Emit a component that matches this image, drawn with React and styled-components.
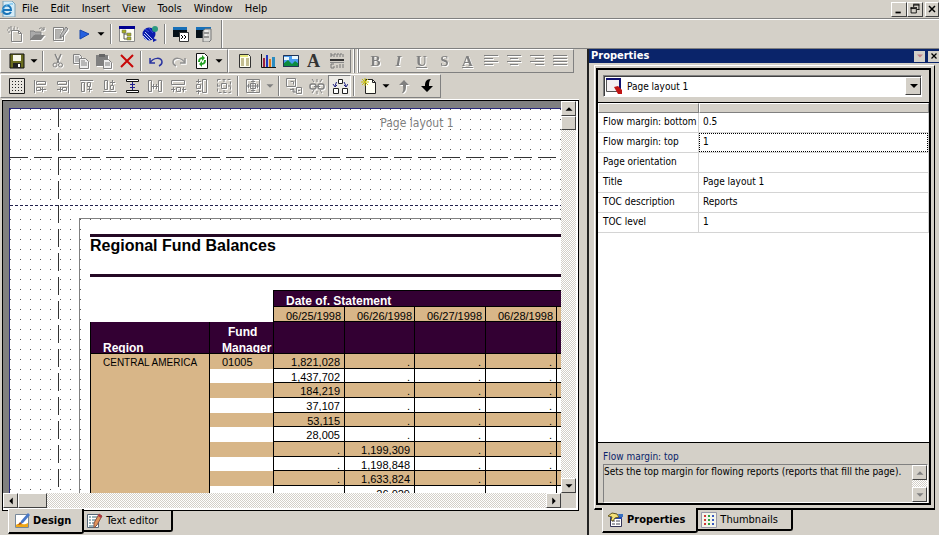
import { useState } from 'react';
import styled, { createGlobalStyle, css } from 'styled-components';

const GRAY = '#808080';
const NAVY = '#0a246a';

const icons = {
  explorer: (
    <>
      <path d="M3 0h9l3 3v13H3z" fill="#d4ecf8" stroke="#7aa0b4" />
      <path d="M3 9h8c0-6-8-6-8 0 0 5 6 5 8 2" fill="none" stroke="#1a74b8" strokeWidth="2" />
      <path d="M1 12C2 7 8 2 13 3" fill="none" stroke="#58b4ea" />
    </>
  ),
  newDoc: (
    <>
      <path d="M4.500 4.500h7l3 3v8h-10z M11.500 4.500v3h3" fill="none" stroke={GRAY} />
      <path d="M1 2h2M4 0v3M1 6h2M3 4h2M7 1h1M0 4h1M6 3h2M10 2h1" stroke={GRAY} />
    </>
  ),
  open: (
    <>
      <path d="M0 14V5h4l1 1h6v3H5z" fill="#aaa" stroke={GRAY} />
      <path d="M0 14l4-5h11l-4 5z" fill={GRAY} />
      <path d="M9 3c2-2 4-1 5 1M14 1v3h-3" fill="none" stroke={GRAY} />
    </>
  ),
  editDoc: (
    <>
      <path d="M.5 1.500h10v13H.5z" fill="none" stroke={GRAY} />
      <path d="M2 4h7M2 6h6M2 8h5M2 10h5M2 12h7" stroke={GRAY} />
      <path d="M13 1l2 2-5 7-3 2 1-4z" fill="#bbb" stroke={GRAY} />
    </>
  ),
  run: <path d="M4 4l9 4-9 5z" fill="#2560e0" stroke="#1746ad" />,
  tree: (
    <>
      <path d="M.5.5h15v15H.5z" fill="#fffff4" stroke="#888" />
      <path d="M0 0h16v3H0z" fill="#000090" />
      <path d="M5 5v8h5M5 8h5" fill="none" stroke="#555" />
      <path d="M3 4h4v3H3zM8 7h4v3H8zM8 11h4v3H8z" fill="#a8b020" stroke="#666" strokeWidth=".5" />
    </>
  ),
  globe: (
    <>
      <circle cx="7" cy="8" r="6.500" fill="#0c1cac" />
      <path d="M1 10l5 5M2 8l6 6M3 6l7 7" stroke="#b8cdf8" />
      <path d="M3 3l4 3M7 2l4 5" stroke="#3850d8" />
      <circle cx="13" cy="3" r="3" fill="#2c9a80" />
      <path d="M11 12l4 2-4 2z" fill="#0c1cac" />
    </>
  ),
  winNext: (
    <>
      <path d="M0 1h14v10H0z" fill="#061018" />
      <path d="M0 1h14v3H0z" fill="#1870b8" />
      <path d="M6.500 6.500h9v9h-9z" fill="#fff" stroke="#333" />
      <path d="M8 9l2 2-2 2M11 9l2 2-2 2" fill="none" stroke="#000" />
    </>
  ),
  winServer: (
    <>
      <path d="M0 1h14v11H0z" fill="#061018" />
      <path d="M0 1h15v3H0z" fill="#1870b8" />
      <path d="M7 5l2-2h6v11l-2 2H7z" fill="#d8d8d4" stroke="#777" />
      <path d="M8 7h5M8 11h5" stroke="#555" />
      <path d="M9 9h2M9 5h3" stroke="#fff" />
    </>
  ),
  save: (
    <>
      <path d="M1 1h14v14H1z" fill="#6b6d20" stroke="#111" />
      <path d="M4 2h8v6H4z" fill="#f6f6ec" />
      <path d="M4 10h8v5H4z" fill="#222" />
      <path d="M9 11h2v3H9z" fill="#fff" />
    </>
  ),
  cut: (
    <>
      <path d="M5 1l4 9M11 1L7 10" stroke={GRAY} fill="none" strokeWidth="1.400" />
      <circle cx="5" cy="12" r="2" fill="none" stroke={GRAY} />
      <circle cx="10.500" cy="12" r="2" fill="none" stroke={GRAY} />
    </>
  ),
  copy: (
    <>
      <path d="M.5 1.500h6l2 2v7h-8z" fill="#eee" stroke={GRAY} />
      <path d="M6.500 5.500h6l3 3v7h-9z" fill="#eee" stroke={GRAY} />
      <path d="M2 4h4M2 6h4M2 8h4M8 8h4M8 10h6M8 12h6" stroke={GRAY} />
    </>
  ),
  paste: (
    <>
      <path d="M0 2h12v11H0z" fill={GRAY} />
      <path d="M3 1h6v3H3z" fill="#666" />
      <path d="M7.500 6.500h5l3 3v6h-8z" fill="#eee" stroke={GRAY} />
      <path d="M9 10h5M9 12h5" stroke={GRAY} />
    </>
  ),
  remove: <path d="M2 2l12 12M14 2L2 14" stroke="#c80808" strokeWidth="2" />,
  undo: <path d="M2 5v5h5M2 10c3-6 12-6 12-1 0 2-1 3-3 4" fill="none" stroke="#2a34a0" strokeWidth="1.500" />,
  redo: <path d="M14 5v5H9M14 10c-3-6-12-6-12-1 0 2 1 3 3 4" fill="none" stroke="#909090" strokeWidth="1.500" />,
  refresh: (
    <>
      <path d="M2.500.5h8l3 3v12h-11z" fill="#fff" stroke="#111" />
      <path d="M5 9c0-4 2-4 5-4M11 7c0 4-2 4-5 4" fill="none" stroke="#22a022" strokeWidth="2" />
      <path d="M8 2l3 3-3 3zM8 8v6l-3-3z" fill="#22a022" />
    </>
  ),
  report: (
    <>
      <path d="M2.500 1.500h9l2 2v11h-11z" fill="#fffff0" stroke="#333" />
      <path d="M3 2h8v2H3z" fill="#e8e87c" />
      <path d="M4 6h3M9 6h3M4 8h3M9 8h3M4 10h3M9 10h3M4 12h3M9 12h3" stroke="#887c30" />
    </>
  ),
  chart: (
    <>
      <path d="M1.500 1v13.500H16" fill="none" stroke="#111" />
      <path d="M3 5h2v9H3z" fill="#a02040" />
      <path d="M6 2h2v12H6z" fill="#2038c0" />
      <path d="M9 6h2v8H9z" fill="#e07818" />
      <path d="M12 4h3v10h-3z" fill="#2a8cc0" />
    </>
  ),
  picture: (
    <>
      <path d="M0 2h16v12H0z" fill="#4a9cf0" />
      <path d="M1 4h5v3H1zM9 3h6v3H9z" fill="#e8f8ff" />
      <path d="M0 14v-3l5-4 4 4 3-3 4 3v3z" fill="#0c8c40" />
      <path d="M.5 2.500h15v11H.5z" fill="none" stroke="#235" />
    </>
  ),
  label: (
    <>
      <path d="M2 0v4M5 1v3M8 1v3M11 1v3M14 1v3M2 2h2M5 1h2M8 1h2M11 1h2" stroke="#777" />
      <path d="M1 6h14v2H1z" fill="#333" />
      <path d="M1 9.500h14" stroke="#888" />
      <path d="M2 11v4M2 11h3M2 15h3M5 13v2M8 12v3M11 11v4M14 11v4" stroke="#777" />
    </>
  ),
  lines: <path d="M1 2.500h14M1 5.500h9M1 8.500h14M1 11.500h9" stroke={GRAY} />,
  linesCenter: <path d="M1 2.500h14M4 5.500h8M1 8.500h14M4 11.500h8" stroke={GRAY} />,
  linesRight: <path d="M1 2.500h14M6 5.500h9M1 8.500h14M6 11.500h9" stroke={GRAY} />,
  linesFull: <path d="M1 2.500h14M1 5.500h14M1 8.500h14M1 11.500h14" stroke={GRAY} />,
  grid: (
    <>
      <path d="M.5.5h15v15H.5z" fill="#e8e5df" stroke="#222" />
      <path d="M3 3.500h11M3 6.500h11M3 9.500h11M3 12.500h11" stroke="#222" strokeDasharray="1 2" />
    </>
  ),
  alignLeft: <path d="M2.500 2v13M4.500 3.500h9v3h-9zM4.500 9.500h4v3h-4zM9 11.500h5M10.500 9v5" fill="none" stroke={GRAY} />,
  alignRight: <path d="M13.500 2v13M2.500 3.500h9v3h-9zM7.500 9.500h4v3h-4zM2 11.500h5M5.500 9v5" fill="none" stroke={GRAY} />,
  alignTop: <path d="M2 2.500h13M3.500 4.500h3v9h-3zM9.500 4.500h3v4h-3zM11.500 9v5M9 11.500h5" fill="none" stroke={GRAY} />,
  alignBottom: <path d="M2 13.500h13M3.500 2.500h3v9h-3zM9.500 7.500h3v4h-3zM11.500 2v5M9 4.500h5" fill="none" stroke={GRAY} />,
  spaceV: (
    <>
      <path d="M2.500 1.500h12v2h-12zM2.500 12.500h12v2h-12z" fill="#fff" stroke="#111" />
      <path d="M8.500 4v8M6 6.500h5M6 9.500h5" fill="none" stroke="#202090" />
    </>
  ),
  spaceH: <path d="M1.500 2.500h3v11h-3zM11.500 2.500h3v11h-3zM5 8.500h6M6.500 6v5M9.500 6v5" fill="none" stroke={GRAY} />,
  sameWidth: <path d="M1.500 2.500h13v4h-13zM6.500 9.500h4v4h-4zM1 11.500h4M3.500 9v5M12 11.500h4M13.500 9v5" fill="none" stroke={GRAY} />,
  sameHeight: <path d="M9.500 1.500h4v13h-4zM3.500 6.500h4v4h-4zM5.500 1v4M3 3.500h5M5.500 12v4M3 13.500h5" fill="none" stroke={GRAY} />,
  sameSize: (
    <>
      <path d="M1.500 1.500h13v13h-13z" fill="none" stroke={GRAY} strokeDasharray="3 2" />
      <path d="M5.500 5.500h5v5h-5zM8 1v3M8 12v3M1 8h3M12 8h3" fill="none" stroke={GRAY} />
    </>
  ),
  center: (
    <>
      <path d="M1.500 1.500h13v13h-13zM5.500 5.500h5v5h-5z" fill="none" stroke={GRAY} />
      <path d="M8 2v12M2 8h12M6 3.500h4M6 12.500h4M3.500 6v4M12.500 6v4" stroke={GRAY} />
    </>
  ),
  group: <path d="M.5.5h9v8h-9zM4.500 3.500h3v3M10.500 9.500h5v6h-5zM4 11.500h4v3M7 10v4h3M12 12.500h2" fill="none" stroke={GRAY} />,
  unlink: (
    <>
      <rect x="1" y="6" width="6" height="5" rx="2" fill="none" stroke={GRAY} strokeWidth="1.500" />
      <rect x="9" y="6" width="6" height="5" rx="2" fill="none" stroke={GRAY} strokeWidth="1.500" />
      <path d="M5 8.500h6M8 1v3M3 1l2 3M13 1l-2 3M8 13v3M3 15l2-3M13 15l-2-3" stroke={GRAY} />
    </>
  ),
  flow: (
    <>
      <path d="M6.500 1.500h4v4h-4zM1.500 10.500h5v5h-5zM10.500 10.500h5v5h-5z" fill="#fff" stroke="#222" />
      <path d="M4.500 4L3 8M1 6l2 3 2-2M12 4l2 4M12 7l2 2 2-3" fill="none" stroke="#202080" />
    </>
  ),
  newPage: (
    <>
      <path d="M4.500 1.500h7l3 3v11h-10z" fill="#fffff4" stroke="#222" />
      <path d="M11.500 1.500v3h3" fill="none" stroke="#222" />
      <path d="M4 0v8M0 4h8M1 1l6 6M7 1L1 7" stroke="#c8c010" />
    </>
  ),
  up: <path d="M8 2l5 5h-3c0 4 0 6-3 8H6c2-3 1-5 1-8H3z" fill={GRAY} />,
  down: <path d="M8 14l6-6h-4c0-3 0-5 2-7-5 0-6 3-6 7H2z" fill="#000" />,
  pageLayout: (
    <>
      <path d="M.5.5h14v13H.5z" fill="#f4f0f2" stroke="#555" />
      <path d="M0 0h15v2H0zM13 0h2v11h-2z" fill="#101070" />
      <path d="M8 9l4-1 4 4v4h-4z" fill="#c01414" />
    </>
  ),
  design: (
    <>
      <path d="M1.500 1.500h13v13h-13z" fill="#fff" stroke="#789" />
      <path d="M2 12c4-3 7 1 12-2v4H2z" fill="#f0a818" />
      <path d="M14 0l2 2-7 8-3 1 1-3z" fill="#4878c8" />
      <path d="M6 9l2 2-4 1z" fill="#a04818" />
    </>
  ),
  textEditor: (
    <>
      <path d="M.5 1.500h11v13H.5z" fill="#fff" stroke="#567" />
      <path d="M2 4h2M5 4h5M2 7h2M5 7h5M2 10h2M5 10h3M2 13h5" stroke="#367" />
      <path d="M12 1l3 2-5 9-3 3v-5z" fill="#e0935c" stroke="#854" />
      <path d="M12 1l3 2-1 2-3-2z" fill="#b03040" />
    </>
  ),
  properties: (
    <>
      <path d="M2.500 5.500h11v9h-11z" fill="#fff" stroke="#335" />
      <path d="M2 5h12v2H2z" fill="#2848b0" />
      <path d="M4 9h3M8 9h4M4 12h3M8 12h4" stroke="#445" />
      <path d="M0 4l4-3 5 1 2 3-4 1-2 3-2-1 1-3z" fill="#f4e078" stroke="#665820" />
      <path d="M10 2h5v3h-4z" fill="#3870c0" />
    </>
  ),
  thumbnails: (
    <>
      <path d="M.5.5h15v15H.5z" fill="#f4f4ea" stroke="#99a" />
      <path d="M4 3v11" stroke="#d03838" strokeWidth="2" strokeDasharray="2 2" />
      <path d="M8 3v11" stroke="#30a040" strokeWidth="2" strokeDasharray="2 2" />
      <path d="M12 3v11" stroke="#3858c0" strokeWidth="2" strokeDasharray="2 2" />
    </>
  ),
  triUp: <path d="M4 10h8L8 6z" fill="currentColor" />,
  triDown: <path d="M4 6h8l-4 4z" fill="currentColor" />,
  triLeft: <path d="M10 4v8L6 8z" fill="currentColor" />,
  triRight: <path d="M6 4v8l4-4z" fill="currentColor" />,
  minimize: <path d="M4 11h6v2H4z" fill="#000" />,
  restore: <path d="M6 3.500h7M6.500 3v3M12.500 3v6M10 8.500h3M3 6.500h7M3.500 6v6.500h6V6M6 2.500h7M3 7.500h6" fill="none" stroke="#000" />,
  close: <path d="M4 4l8 8M12 4l-8 8" stroke="#000" strokeWidth="2" />,
};

function Icon({ name, size = 16 }) {
  return (
    <svg width={size} height={size} viewBox="0 0 16 16" aria-hidden="true">
      {icons[name]}
    </svg>
  );
}

const menus = ['File', 'Edit', 'Insert', 'View', 'Tools', 'Window', 'Help'];

const standardTools = [
  { icon: 'newDoc', label: 'New', off: true },
  { icon: 'open', label: 'Open', off: true },
  { icon: 'editDoc', label: 'Edit', off: true },
  { icon: 'run', label: 'Run' },
  { drop: 'Run options' },
  { sep: true },
  { icon: 'tree', label: 'Tree' },
  { icon: 'globe', label: 'Web' },
  { sep: true },
  { icon: 'winNext', label: 'Log' },
  { icon: 'winServer', label: 'Servers' },
];

const editTools = [
  { icon: 'save', label: 'Save' },
  { drop: 'Save options' },
  { sep: true },
  { icon: 'cut', label: 'Cut', off: true },
  { icon: 'copy', label: 'Copy', off: true },
  { icon: 'paste', label: 'Paste', off: true },
  { icon: 'remove', label: 'Delete' },
  { sep: true },
  { icon: 'undo', label: 'Undo' },
  { icon: 'redo', label: 'Redo', off: true },
  { icon: 'refresh', label: 'Refresh' },
  { drop: 'Refresh options' },
];

const insertTools = [
  { icon: 'report', label: 'Table' },
  { icon: 'chart', label: 'Chart' },
  { icon: 'picture', label: 'Picture' },
  { glyph: 'A', label: 'Text', dark: true },
  { icon: 'label', label: 'Caption' },
];

const formatTools = [
  { glyph: 'B', label: 'Bold', off: true },
  { glyph: 'I', label: 'Italic', off: true, look: 'italic' },
  { glyph: 'U', label: 'Underline', off: true, look: 'underline' },
  { glyph: 'S', label: 'Style', off: true },
  { glyph: 'A', label: 'Font color', off: true, look: 'underline' },
  { icon: 'lines', label: 'Left', off: true },
  { icon: 'linesCenter', label: 'Center', off: true },
  { icon: 'linesRight', label: 'Right', off: true },
  { icon: 'linesFull', label: 'Justify', off: true },
];

const layoutTools = [
  { icon: 'grid', label: 'Show grid' },
  { icon: 'alignLeft', label: 'Align left', off: true },
  { icon: 'alignRight', label: 'Align right', off: true },
  { icon: 'alignTop', label: 'Align top', off: true },
  { icon: 'alignBottom', label: 'Align bottom', off: true },
  { icon: 'spaceV', label: 'Space vertically' },
  { icon: 'spaceH', label: 'Space horizontally', off: true },
  { icon: 'sameWidth', label: 'Same width', off: true },
  { icon: 'sameHeight', label: 'Same height', off: true },
  { icon: 'sameSize', label: 'Same size', off: true },
  { sep: true },
  { icon: 'center', label: 'Center', off: true },
  { drop: 'Center options', off: true },
  { sep: true },
  { icon: 'group', label: 'Group', off: true },
  { icon: 'unlink', label: 'Unlink', off: true },
  { icon: 'flow', label: 'Flow', pressed: true },
  { sep: true },
  { icon: 'newPage', label: 'New page' },
  { drop: 'New page options' },
  { icon: 'up', label: 'Move up', off: true },
  { icon: 'down', label: 'Move down' },
];

const columns = [
  { date: '06/25/1998', width: 71 },
  { date: '06/26/1998', width: 70 },
  { date: '06/27/1998', width: 71 },
  { date: '06/28/1998', width: 71 },
  { date: '', width: 71 },
];

const balances = [
  ['1,821,028', '.', '.', '.', ''],
  ['1,437,702', '.', '.', '.', ''],
  ['184,219', '.', '.', '.', ''],
  ['37,107', '.', '.', '.', ''],
  ['53,115', '.', '.', '.', ''],
  ['28,005', '.', '.', '.', ''],
  ['.', '1,199,309', '.', '.', ''],
  ['.', '1,198,848', '.', '.', ''],
  ['.', '1,633,824', '.', '.', ''],
  ['.', '26,029', '.', '.', ''],
];

const initialProperties = [
  { name: 'Flow margin: bottom', value: '0.5' },
  { name: 'Flow margin: top', value: '1' },
  { name: 'Page orientation', value: '' },
  { name: 'Title', value: 'Page layout 1' },
  { name: 'TOC description', value: 'Reports' },
  { name: 'TOC level', value: '1' },
];

function Tools({ items }) {
  return items.map((item, i) => {
    if (item.sep) return <StyledSeparator key={i} />;
    if (item.drop) {
      return (
        <StyledDropButton key={i} aria-label={item.drop} disabled={item.off}>
          <Icon name="triDown" size={14} />
        </StyledDropButton>
      );
    }
    return (
      <StyledToolButton
        key={i}
        aria-label={item.label}
        disabled={item.off}
        $pressed={item.pressed}
        $look={item.look}
        $dark={item.dark}
      >
        {item.glyph || <Icon name={item.icon} />}
      </StyledToolButton>
    );
  });
}

function ReportTable() {
  return (
    <StyledTable>
      <colgroup>
        <col width="119" />
        <col width="64" />
        {columns.map((column, i) => (
          <col key={i} width={column.width} />
        ))}
      </colgroup>
      <thead>
        <tr>
          <td colSpan={2} rowSpan={2} />
          <StyledHeadCell colSpan={5} $top>
            <StyledHeadText $height={15}>Date of. Statement</StyledHeadText>
          </StyledHeadCell>
        </tr>
        <tr>
          {columns.map((column, i) => (
            <StyledNumberCell as="th" key={i} $tan>
              <StyledCellText $height={14}>{column.date}</StyledCellText>
            </StyledNumberCell>
          ))}
        </tr>
        <tr>
          <StyledHeadCell>
            <StyledHeadText $height={31} $end>
              Region
            </StyledHeadText>
          </StyledHeadCell>
          <StyledHeadCell>
            <StyledHeadText $height={31} $indent>
              Fund Manager
            </StyledHeadText>
          </StyledHeadCell>
          {columns.map((_, i) => (
            <StyledHeadCell key={i} />
          ))}
        </tr>
      </thead>
      <tbody>
        {balances.map((row, i) => (
          <StyledBodyRow key={i}>
            {i === 0 && (
              <StyledRegionCell rowSpan={balances.length} $tan $small>
                <StyledCellText $height={13}>CENTRAL AMERICA</StyledCellText>
              </StyledRegionCell>
            )}
            <StyledRegionCell $tan={i % 2 === 0}>
              {i === 0 && <StyledCellText $height={13}>01005</StyledCellText>}
            </StyledRegionCell>
            {row.map((value, j) => (
              <StyledNumberCell key={j} $tan={i % 2 === 0}>
                <StyledCellText $height={13}>{value}</StyledCellText>
              </StyledNumberCell>
            ))}
          </StyledBodyRow>
        ))}
      </tbody>
    </StyledTable>
  );
}

function Designer() {
  return (
    <StyledFrame>
      <StyledCanvas>
        <StyledPaper>
          <StyledPageLabel>Page layout 1</StyledPageLabel>
          <StyledReport>
            <StyledReportBody>
              <StyledReportTitle>Regional Fund Balances</StyledReportTitle>
              <ReportTable />
            </StyledReportBody>
          </StyledReport>
        </StyledPaper>
      </StyledCanvas>
      <StyledScrollBar $vertical>
        <StyledScrollButton aria-label="Scroll up">
          <Icon name="triUp" size={14} />
        </StyledScrollButton>
        <StyledThumb $length={14} $vertical />
        <StyledTrack />
        <StyledScrollButton aria-label="Scroll down">
          <Icon name="triDown" size={14} />
        </StyledScrollButton>
      </StyledScrollBar>
      <StyledScrollBar>
        <StyledScrollButton aria-label="Scroll left">
          <Icon name="triLeft" size={14} />
        </StyledScrollButton>
        <StyledThumb $length={29} />
        <StyledTrack />
        <StyledScrollButton aria-label="Scroll right">
          <Icon name="triRight" size={14} />
        </StyledScrollButton>
      </StyledScrollBar>
      <StyledCorner />
    </StyledFrame>
  );
}

function PropertiesPanel() {
  const [properties, setProperties] = useState(initialProperties);
  const [selected, setSelected] = useState(1);

  const changeValue = (index, value) => {
    setProperties(
      properties.map((item, i) => (i === index ? { ...item, value } : item))
    );
  };

  return (
    <StyledPanel>
      <StyledPanelInner>
        <StyledComboArea>
          <StyledCombo>
            <Icon name="pageLayout" />
            <StyledSelect aria-label="Object">
              <option>Page layout 1</option>
            </StyledSelect>
            <StyledComboArrow>
              <Icon name="triDown" />
            </StyledComboArrow>
          </StyledCombo>
        </StyledComboArea>
        <StyledGridArea>
          <StyledPropertyTable>
            <colgroup>
              <col width="101" />
              <col />
            </colgroup>
            <thead>
              <tr>
                <th />
                <th />
              </tr>
            </thead>
            <tbody>
              {properties.map((item, i) => (
                <tr key={item.name}>
                  <td>
                    <label htmlFor={`property-${i}`}>{item.name}</label>
                  </td>
                  <td>
                    <StyledValue
                      id={`property-${i}`}
                      value={item.value}
                      $selected={selected === i}
                      onFocus={() => setSelected(i)}
                      onChange={(e) => changeValue(i, e.target.value)}
                    />
                  </td>
                </tr>
              ))}
            </tbody>
          </StyledPropertyTable>
        </StyledGridArea>
        <StyledHelp>
          <StyledHelpTitle>{properties[selected].name}</StyledHelpTitle>
          <StyledHelpBox>
            <p>Sets the top margin for flowing reports (reports that fill the page).</p>
            <StyledHelpScroll>
              <StyledScrollButton aria-label="Scroll up" disabled>
                <Icon name="triUp" size={14} />
              </StyledScrollButton>
              <StyledTrack />
              <StyledScrollButton aria-label="Scroll down" disabled>
                <Icon name="triDown" size={14} />
              </StyledScrollButton>
            </StyledHelpScroll>
          </StyledHelpBox>
        </StyledHelp>
      </StyledPanelInner>
    </StyledPanel>
  );
}

function App() {
  return (
    <StyledApp>
      <GlobalStyle />
      <StyledMenuBar>
        <Icon name="explorer" />
        {menus.map((menu) => (
          <StyledMenu key={menu}>{menu}</StyledMenu>
        ))}
        <StyledWindowButtons>
          <StyledWindowButton aria-label="Minimize">
            <Icon name="minimize" size={14} />
          </StyledWindowButton>
          <StyledWindowButton aria-label="Restore">
            <Icon name="restore" size={14} />
          </StyledWindowButton>
          <StyledWindowButton aria-label="Close">
            <Icon name="close" size={12} />
          </StyledWindowButton>
        </StyledWindowButtons>
      </StyledMenuBar>
      <StyledMainTools>
        <Tools items={standardTools} />
      </StyledMainTools>
      <StyledWorkspace>
        <StyledEditor>
          <StyledToolRow>
            <StyledToolGroup>
              <Tools items={editTools} />
            </StyledToolGroup>
            <StyledToolGroup>
              <Tools items={insertTools} />
            </StyledToolGroup>
            <StyledGrip />
            <StyledToolGroup>
              <Tools items={formatTools} />
            </StyledToolGroup>
          </StyledToolRow>
          <StyledToolRow>
            <StyledToolGroup>
              <Tools items={layoutTools} />
            </StyledToolGroup>
          </StyledToolRow>
          <Designer />
          <StyledTabs>
            <StyledTab $active>
              <Icon name="design" />
              Design
            </StyledTab>
            <StyledTab>
              <Icon name="textEditor" />
              Text editor
            </StyledTab>
          </StyledTabs>
        </StyledEditor>
        <StyledDock>
          <StyledDockTitle>
            Properties
            <StyledDockButtons>
              <StyledDockButton aria-label="Panel menu" $faded>
                <Icon name="triDown" size={12} />
              </StyledDockButton>
              <StyledDockButton aria-label="Close panel">
                <Icon name="close" size={10} />
              </StyledDockButton>
            </StyledDockButtons>
          </StyledDockTitle>
          <PropertiesPanel />
          <StyledTabs>
            <StyledTab $active>
              <Icon name="properties" />
              Properties
            </StyledTab>
            <StyledTab>
              <Icon name="thumbnails" />
              Thumbnails
            </StyledTab>
          </StyledTabs>
        </StyledDock>
      </StyledWorkspace>
    </StyledApp>
  );
}

export default App;

const GlobalStyle = createGlobalStyle`
  * {
    box-sizing: border-box;
  }

  body {
    margin: 0;
    overflow: hidden;
    background: #d4d0c8;
    color: #000;
    font: 11px 'DejaVu Sans Condensed', 'DejaVu Sans', sans-serif;
  }

  button,
  input,
  select {
    margin: 0;
    padding: 0;
    border: 0;
    border-radius: 0;
    background: none;
    color: inherit;
    font: inherit;
  }

  svg {
    display: block;
    flex: none;
  }

  p {
    margin: 0;
  }
`;

const raised = css`
  border: 1px solid;
  border-color: #fff #404040 #404040 #fff;
  background: #d4d0c8;
`;

const StyledApp = styled.div`
  display: flex;
  flex-direction: column;
  height: 100vh;
`;

const StyledMenuBar = styled.header`
  display: flex;
  align-items: center;
  flex: none;
  height: 19px;
  border-bottom: 1px solid ${GRAY};
`;

const StyledMenu = styled.button`
  padding: 0 6px 2px;
`;

const StyledWindowButtons = styled.div`
  display: flex;
  margin-left: auto;
`;

const StyledWindowButton = styled.button`
  ${raised}
  display: flex;
  align-items: center;
  justify-content: center;
  width: 16px;
  height: 15px;

  &:last-child {
    width: 14px;
    margin-left: 2px;
  }
`;

const StyledSeparator = styled.div`
  width: 2px;
  height: 20px;
  margin: 0 2px;
  border-left: 1px solid ${GRAY};
  border-right: 1px solid #fff;
`;

const StyledMainTools = styled.div`
  display: flex;
  align-items: center;
  flex: none;
  height: 30px;
  padding-left: 3px;
  border-top: 1px solid #fff;
  border-bottom: 1px solid ${GRAY};

  ${StyledSeparator} {
    margin: 0 3px;
  }

  &::after {
    content: '';
    align-self: stretch;
    margin-left: 6px;
    border-left: 1px solid ${GRAY};
    border-right: 1px solid #fff;
  }
`;

const StyledToolRow = styled.div`
  display: flex;
  flex: none;
  height: 25px;
`;

const StyledToolGroup = styled.div`
  display: flex;
  align-items: center;
  height: 24px;
  padding: 0 2px 0 4px;
  border: 1px solid;
  border-color: #fff ${GRAY} ${GRAY} #fff;
`;

const StyledGrip = styled.div`
  width: 8px;
  height: 24px;
  border-right: 1px solid ${GRAY};
  box-shadow: inset -1px 0 #fff, inset -3px 0 #d4d0c8, inset -4px 0 ${GRAY}, inset -5px 0 #fff;
`;

const StyledToolButton = styled.button`
  display: flex;
  align-items: center;
  justify-content: center;
  width: 23px;
  height: 22px;
  font: bold ${({ $dark }) => ($dark ? 18 : 15)}px 'Liberation Serif', serif;
  font-style: ${({ $look }) => ($look === 'italic' ? 'italic' : 'normal')};
  text-decoration: ${({ $look }) => ($look === 'underline' ? 'underline' : 'none')};
  color: ${({ $dark }) => ($dark ? '#333' : GRAY)};

  &:disabled {
    filter: drop-shadow(1px 1px 0 #fff);
  }

  ${({ $pressed }) =>
    $pressed &&
    css`
      border: 1px solid;
      border-color: ${GRAY} #fff #fff ${GRAY};
      background: #eceae5;
    `}
`;

const StyledDropButton = styled.button`
  display: flex;
  align-items: center;
  justify-content: center;
  width: 12px;
  height: 22px;

  &:disabled {
    color: ${GRAY};
  }
`;

const StyledWorkspace = styled.div`
  display: grid;
  grid-template-columns: minmax(0, 1fr) 352px;
  flex: 1;
  min-height: 0;
`;

const StyledEditor = styled.main`
  display: flex;
  flex-direction: column;
  min-width: 0;
  min-height: 0;
`;

const StyledFrame = styled.section`
  display: grid;
  grid-template-columns: minmax(0, 1fr) 15px;
  grid-template-rows: minmax(0, 1fr) 15px;
  flex: 1;
  min-height: 0;
  margin: 1px 8px 0 2px;
  padding: 0 2px 2px 0;
  border: 1px solid #000;
  background: #fff;
  box-shadow: 0 -1px #fff;
`;

const StyledCanvas = styled.div`
  overflow: hidden;
  padding: 7px 0 0 6px;
  background: ${GRAY};
`;

const StyledPaper = styled.article`
  width: 816px;
  height: 1056px;
  border: 1px solid #28287c;
  background:
    linear-gradient(90deg, #333 18px, transparent 0) 0 48px / 24px 1px repeat-x,
    linear-gradient(#333 18px, transparent 0) 48px 0 / 1px 24px repeat-y,
    linear-gradient(90deg, #20204c 3px, transparent 0) 0 96px / 5px 1px repeat-x,
    conic-gradient(at 1px 1px, transparent 75%, #555 0) 0 0 / 10px 10px,
    #fff;
`;

const StyledPageLabel = styled.div`
  height: 109px;
  padding-top: 7px;
  color: ${GRAY};
  font-size: 12px;
  line-height: 14px;
  text-align: center;
`;

const StyledReport = styled.div`
  height: 800px;
  margin-left: 69px;
  padding: 1px;
  border: 1px solid ${GRAY};
  background: #fff content-box;
`;

const StyledReportBody = styled.div`
  padding: 14px 0 0 9px;
  font-family: 'Liberation Sans', Arial, sans-serif;
`;

const StyledReportTitle = styled.h1`
  height: 43px;
  margin: 0 0 13px;
  border: solid #240824;
  border-width: 3px 0;
  font-size: 16px;
  line-height: 18px;
`;

const StyledTable = styled.table`
  width: 537px;
  table-layout: fixed;
  border-spacing: 0;
  font-size: 11px;

  td,
  th {
    padding: 0;
    vertical-align: top;
  }
`;

const StyledHeadCell = styled.th`
  border: solid #000;
  border-width: ${({ $top }) => ($top ? '1px' : '0')} 0 1px 1px;
  background: #330033;
  color: #fff;
  font-size: 12px;
  text-align: left;
`;

const StyledRegionCell = styled.td`
  border-left: 1px solid #000;
  background: ${({ $tan }) => ($tan ? '#d8b688' : '#fff')};
  font-size: ${({ $small }) => ($small ? 10 : 11)}px;
`;

const StyledNumberCell = styled.td`
  border: solid #000;
  border-width: 0 0 1px 1px;
  background: ${({ $tan }) => ($tan ? '#d8b688' : '#fff')};
  font-weight: normal;
  text-align: right;
`;

const StyledHeadText = styled.div`
  height: ${({ $height }) => $height}px;
  padding: ${({ $end }) => ($end ? 18 : 2)}px 0 0 12px;
  overflow: hidden;
  line-height: 16px;
  text-indent: ${({ $indent }) => ($indent ? 6 : 0)}px;
`;

const StyledCellText = styled.div`
  height: ${({ $height }) => $height}px;
  padding: ${({ $height }) => $height - 10}px 4px 0 12px;
  overflow: hidden;
  line-height: 11px;
  white-space: nowrap;

  ${StyledRegionCell} & {
    padding-right: 0;
  }
`;

const StyledBodyRow = styled.tr`
  height: 15px;

  &:nth-child(3n + 2) {
    height: 14px;
  }
`;

const StyledScrollBar = styled.div`
  display: flex;
  flex-direction: ${({ $vertical }) => ($vertical ? 'column' : 'row')};
`;

const StyledScrollButton = styled.button`
  ${raised}
  display: flex;
  align-items: center;
  justify-content: center;
  flex: none;
  width: 15px;
  height: 15px;

  &:disabled {
    color: ${GRAY};
  }
`;

const StyledThumb = styled.div`
  ${raised}
  flex: none;
  width: ${({ $vertical, $length }) => ($vertical ? 15 : $length)}px;
  height: ${({ $vertical, $length }) => ($vertical ? $length : 15)}px;
`;

const StyledTrack = styled.div`
  flex: 1;
  background: conic-gradient(#fff 25%, #d4d0c8 0 50%, #fff 0 75%, #d4d0c8 0) 0 0 / 2px 2px;
`;

const StyledCorner = styled.div`
  background: #d4d0c8;
`;

const StyledTabs = styled.nav`
  display: flex;
  align-items: flex-start;
  flex: none;
  height: 24px;
  padding-left: 8px;
`;

const StyledTab = styled.button`
  display: flex;
  align-items: center;
  gap: 3px;
  height: 21px;
  padding: 0 13px 0 3px;
  border: solid #000;
  border-width: 0 2px 2px 0;
  border-radius: 0 0 3px 0;

  ${({ $active }) =>
    $active &&
    css`
      z-index: 1;
      height: 25px;
      margin-top: -2px;
      padding: 0 11px 0 5px;
      border-left: 1px solid #fff;
      background: #d4d0c8;
      font-weight: bold;
    `}
`;

const StyledDock = styled.aside`
  display: flex;
  flex-direction: column;
  min-height: 0;
  border-left: 2px solid #222;

  ${StyledTabs} {
    height: 25px;
    padding-left: 13px;
  }
`;

const StyledDockTitle = styled.h2`
  display: flex;
  align-items: center;
  flex: none;
  height: 14px;
  margin: 0;
  padding-left: 2px;
  background: ${NAVY};
  color: #fff;
  font-size: 11px;
  line-height: 14px;
`;

const StyledDockButtons = styled.div`
  display: flex;
  gap: 3px;
  margin-left: auto;
`;

const StyledDockButton = styled.button`
  display: flex;
  align-items: center;
  justify-content: center;
  width: 11px;
  height: 11px;
  background: #d4d0c8;
  color: ${({ $faded }) => ($faded ? '#c08088' : '#000')};
`;

const StyledPanel = styled.section`
  display: flex;
  flex: 1;
  min-height: 0;
  margin: 2px 4px 0 5px;
  padding: 2px 3px 3px 1px;
  border: solid;
  border-width: 1px 1px 2px;
  border-color: #fff #000 #000 #fff;
`;

const StyledPanelInner = styled.div`
  display: flex;
  flex-direction: column;
  flex: 1;
  min-width: 0;
  border: 2px solid #000;
  font-size: 10px;
`;

const StyledComboArea = styled.div`
  padding: 5px 7px 5px 5px;
`;

const StyledCombo = styled.div`
  display: flex;
  align-items: center;
  height: 22px;
  padding-left: 2px;
  border: 1px solid;
  border-color: ${GRAY} #fff #fff ${GRAY};
  background: #fff;
  box-shadow: inset 1px 1px #404040;
`;

const StyledSelect = styled.select`
  flex: 1;
  min-width: 0;
  padding-left: 5px;
  appearance: none;
  outline: none;
`;

const StyledComboArrow = styled.span`
  ${raised}
  width: 16px;
  height: 18px;
  pointer-events: none;
`;

const StyledGridArea = styled.div`
  flex: 1;
  min-height: 0;
  border: solid #000;
  border-width: 1px 0;
  background: #fff;
`;

const StyledPropertyTable = styled.table`
  width: 100%;
  table-layout: fixed;
  border-spacing: 0;

  th {
    height: 10px;
    padding: 0;
    border: 1px solid;
    border-color: #fff ${GRAY} ${GRAY} #fff;
    background: #d4d0c8;
  }

  td {
    height: 20px;
    padding: 0;
    border: solid #d4d4d4;
    border-width: 0 1px 1px 0;
    vertical-align: top;
  }

  label {
    display: block;
    padding-left: 5px;
    line-height: 17px;
    white-space: nowrap;
  }
`;

const StyledValue = styled.input`
  display: block;
  width: 100%;
  height: 19px;
  padding: 0 3px 2px;
  border: 1px ${({ $selected }) => ($selected ? 'dotted #000' : 'solid transparent')};
  outline: none;
`;

const StyledHelp = styled.div`
  flex: none;
  padding: 7px 1px 0 5px;
`;

const StyledHelpTitle = styled.div`
  color: ${NAVY};
  line-height: 14px;
`;

const StyledHelpBox = styled.div`
  display: flex;
  justify-content: space-between;
  height: 39px;
  border: 1px solid;
  border-color: ${GRAY} #fff #fff ${GRAY};
  line-height: 14px;
`;

const StyledHelpScroll = styled.div`
  display: flex;
  flex-direction: column;
`;
